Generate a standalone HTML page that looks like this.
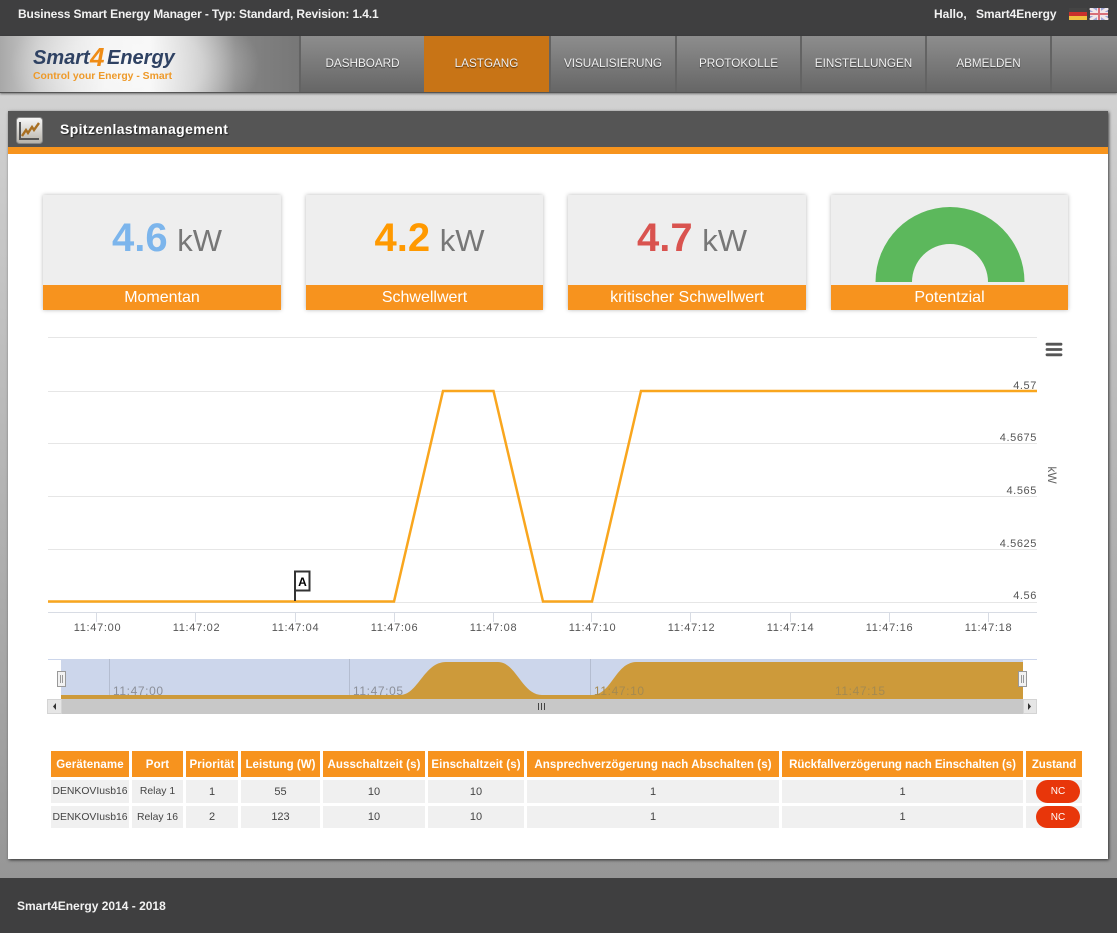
<!DOCTYPE html>
<html lang="de"><head><meta charset="utf-8"><title>Spitzenlastmanagement</title>
<style>
*{box-sizing:border-box}
html,body{margin:0;padding:0}
body{width:1117px;height:933px;position:relative;overflow:hidden;font-family:"Liberation Sans",Arial,sans-serif;background:linear-gradient(#d2d2d2 90px,#969696 880px)}
.a{position:absolute;white-space:nowrap}
#top{left:0;top:0;width:1117px;height:36px;background:#3f3f40;color:#f2f2f2;font-weight:bold;font-size:12px}
#nav{left:0;top:36px;width:1117px;height:57px;background:linear-gradient(#8d8d8d,#666);border-bottom:1px solid #555;box-shadow:0 1px 2px rgba(0,0,0,.45)}
#logo{left:0;top:0;width:299px;height:56px;background:radial-gradient(ellipse 125px 70px at 135px 30px,rgba(255,255,255,.55) 0,rgba(255,255,255,.4) 55%,rgba(255,255,255,0) 100%),linear-gradient(90deg,#a8a8a8 0,#cccccc 40px,#eeeeee 105px,#f2f2f2 150px,#bcbcbc 195px,#858585 235px,#777 299px)}
.btn{top:0;height:56px;width:125px;border-left:2px solid #636363;color:#f0f0f0;font-size:11.7px;line-height:55px;text-align:center;text-shadow:0 1px 1px rgba(0,0,0,.6)}
#panel{left:8px;top:111px;width:1100px;height:748px;background:#fff;box-shadow:1px 1px 3px rgba(0,0,0,.7)}
#ph{left:0;top:0;width:1100px;height:36px;background:#555;color:#fff;font-weight:bold;font-size:14px;letter-spacing:.38px;line-height:36px;text-shadow:1px 1px 1px #222}
#po{left:0;top:36px;width:1100px;height:7px;background:#f7941d}
.card{top:195px;height:115px;background:#eee;box-shadow:0 0 4px rgba(0,0,0,.28)}
.lab{left:0;bottom:0;width:100%;height:25px;background:#f7931e;color:#fff;font-size:16px;line-height:25px;text-align:center}
.val{left:0;top:19px;width:100%;padding-left:10px;text-align:center;font-size:31px;line-height:48px;color:#777}
.val b{font-size:40px;margin-right:1px}
.th,.td{text-align:center;font-size:11px}
.th{top:751px;height:26px;line-height:28px;background:#f7931e;color:#fff;font-weight:bold;font-size:11.5px;letter-spacing:.1px}
.td{height:23px;line-height:24px;background:#f0f0f0;color:#444}
.r1{top:780px}.r2{top:806px;height:22px;line-height:23px}
.s{font-size:10.4px}
.nc{left:1036px;width:44px;height:23px;border-radius:12px;background:#e8360a;color:#fff;font-size:10px;line-height:24px;text-align:center}
.nc.r2{height:22px;line-height:23px}
#foot{left:0;top:878px;width:1117px;height:55px;background:#3f3f40;color:#f2f2f2;font-weight:bold;font-size:12px}
svg text{font-family:"Liberation Sans",Arial,sans-serif}
</style></head><body>
<div class="a" id="top">
<span class="a" style="left:18px;top:7px;letter-spacing:-.13px">Business Smart Energy Manager - Typ: Standard, Revision: 1.4.1</span>
<span class="a" style="left:934px;top:7px">Hallo,</span>
<span class="a" style="left:976px;top:7px;letter-spacing:-.08px">Smart4Energy</span>
<svg class="a" style="left:1069px;top:8px" width="40" height="12" viewBox="0 0 40 12"><rect width="18" height="4" fill="#444"/><rect y="4" width="18" height="4" fill="#c9302c"/><rect y="8" width="18" height="4" fill="#f0c040"/><rect x="21" width="18" height="12" fill="#a0a6d8"/><path d="M21 0L39 12M39 0L21 12" stroke="#f2e8ea" stroke-width="3"/><path d="M30 0V12M21 6H39" stroke="#f2e8ea" stroke-width="4"/><path d="M30 0V12M21 6H39" stroke="#d8707a" stroke-width="2"/></svg>
</div>
<div class="a" id="nav">
<div class="a" id="logo">
<span class="a" style="left:33px;top:10px;font-size:20px;line-height:24px;font-weight:bold;font-style:italic;color:#2f4263">Smart</span>
<span class="a" style="left:90px;top:6px;font-size:26px;line-height:30px;font-weight:bold;font-style:italic;color:#ef8c16">4</span>
<span class="a" style="left:107px;top:10px;font-size:20px;line-height:24px;font-weight:bold;font-style:italic;color:#2f4263">Energy</span>
<span class="a" style="left:33px;top:34px;font-size:10.4px;line-height:13px;font-weight:bold;color:#ee9a2a">Control your Energy - Smart</span>
</div>
<div class="a btn" style="left:299px">DASHBOARD</div>
<div class="a btn" style="left:424px;background:#c87416;border-left:0">LASTGANG</div>
<div class="a btn" style="left:549px;width:126px">VISUALISIERUNG</div>
<div class="a btn" style="left:675px">PROTOKOLLE</div>
<div class="a btn" style="left:800px">EINSTELLUNGEN</div>
<div class="a btn" style="left:925px">ABMELDEN</div>
<div class="a btn" style="left:1050px;width:67px"></div>
</div>
<div class="a" id="panel">
<div class="a" id="ph"><span class="a" style="left:52px;top:0">Spitzenlastmanagement</span>
<svg class="a" style="left:8px;top:6px" width="27" height="27" viewBox="0 0 27 27"><defs><linearGradient id="ig" x1="0" y1="0" x2="0" y2="1"><stop offset="0" stop-color="#f8f8f8"/><stop offset="1" stop-color="#b5b1a8"/></linearGradient></defs><rect x=".5" y=".5" width="26" height="26" rx="3" fill="url(#ig)" stroke="#888"/><path d="M4 5V22H23" fill="none" stroke="#555" stroke-width="2"/><path d="M6 19L10 13L12 16L16 10L18 13L23 6" fill="none" stroke="#a86f22" stroke-width="2.4"/></svg>
</div>
<div class="a" id="po"></div>
</div>
<div class="a card" style="left:43px;width:238px"><div class="a val"><b style="color:#7cb5ec">4.6</b> kW</div><div class="a lab">Momentan</div></div>
<div class="a card" style="left:306px;width:237px"><div class="a val"><b style="color:#f90">4.2</b> kW</div><div class="a lab">Schwellwert</div></div>
<div class="a card" style="left:568px;width:238px"><div class="a val"><b style="color:#d9534f">4.7</b> kW</div><div class="a lab">kritischer Schwellwert</div></div>
<div class="a card" style="left:831px;width:237px"><svg class="a" style="left:0;top:0" width="237" height="90"><path d="M44.5 87A74.5 75 0 0 1 193.5 87H157A38 38 0 0 0 81 87Z" fill="#5cb85c"/></svg><div class="a lab">Potentzial</div></div>
<svg class="a" style="left:0;top:330px" width="1117" height="395" viewBox="0 330 1117 395">
<g stroke="#e6e6e6" fill="none"><path d="M48 337.5H1037M48 391.5H1037M48 443.5H1037M48 496.5H1037M48 549.5H1037M48 602.5H1037"/></g>
<path d="M48 612.5H1037" stroke="#d8dce4"/>
<path d="M96.5 612V622M195.5 612V622M295.5 612V622M394.5 612V622M493.5 612V622M591.5 612V622M690.5 612V622M790.5 612V622M889.5 612V622M988.5 612V622" stroke="#d8dce4"/>
<path d="M48 601.5H394L443 391H493.5L543 601.5H592L641 391H1037" fill="none" stroke="#f9a61e" stroke-width="2.5"/>
<path d="M295 601V571.5H309.5V590.5H295" fill="#fff" stroke="#333" stroke-width="2"/>
<text x="302.5" y="586" font-size="12" font-weight="bold" text-anchor="middle" fill="#000">A</text>
<g font-size="11" fill="#555" letter-spacing=".7" text-anchor="middle">
<text x="97.5" y="631">11:47:00</text><text x="196.5" y="631">11:47:02</text><text x="295.5" y="631">11:47:04</text><text x="394.5" y="631">11:47:06</text><text x="493.5" y="631">11:47:08</text><text x="592.5" y="631">11:47:10</text><text x="691.5" y="631">11:47:12</text><text x="790.5" y="631">11:47:14</text><text x="889.5" y="631">11:47:16</text><text x="988.5" y="631">11:47:18</text>
</g>
<g font-size="11" fill="#555" letter-spacing=".6" text-anchor="end">
<text x="1037" y="389">4.57</text><text x="1037" y="441">4.5675</text><text x="1037" y="494">4.565</text><text x="1037" y="547">4.5625</text><text x="1037" y="599">4.56</text>
</g>
<text transform="translate(1048 475) rotate(90)" font-size="12" fill="#666" text-anchor="middle">kW</text>
<path d="M1047 344.2H1061M1047 349.5H1061M1047 354.8H1061" stroke="#555" stroke-width="2.8" stroke-linecap="round"/>
<rect x="61" y="659" width="962" height="40" fill="#ccd6eb"/>
<path d="M48 659.5H1037" stroke="#ccd6eb"/>
<path d="M109.5 659V699M349.5 659V699M590.5 659V699" stroke="#b4bdd0"/>
<g font-size="12" fill="#8b8f98" letter-spacing=".6"><text x="113" y="695">11:47:00</text><text x="353" y="695">11:47:05</text></g>
<path d="M61 699V695H400C418 695 424 662 446 662H498C516 662 522 695 542 695H592C612 695 615 662 637 662H1023V699Z" fill="#cd9a3a"/>
<g font-size="12" fill="#a58a50" letter-spacing=".6"><text x="594" y="695">11:47:10</text><text x="835" y="695">11:47:15</text></g>
<rect x="47" y="699" width="990" height="15" fill="#c8c8c8"/>
<rect x="47.5" y="699.5" width="14" height="14" fill="#e6e6e6" stroke="#d4d4d4"/>
<rect x="1023.5" y="699.5" width="13" height="14" fill="#e6e6e6" stroke="#d4d4d4"/>
<path d="M56 703L53 706.5L56 710ZM1028 703L1031 706.5L1028 710Z" fill="#333"/>
<path d="M538.5 703V710M541.5 703V710M544.5 703V710" stroke="#444"/>
<g fill="#f2f2f2" stroke="#999"><rect x="57.5" y="671.5" width="8" height="15"/><rect x="1018.5" y="671.5" width="8" height="15"/></g>
<path d="M60.5 675V683M62.5 675V683M1021.5 675V683M1023.5 675V683" stroke="#999"/>
</svg>
<div class="a th" style="left:51px;width:78px">Gerätename</div>
<div class="a th" style="left:132px;width:51px">Port</div>
<div class="a th" style="left:186px;width:52px">Priorität</div>
<div class="a th" style="left:241px;width:79px;letter-spacing:.03px">Leistung (W)</div>
<div class="a th" style="left:323px;width:102px">Ausschaltzeit (s)</div>
<div class="a th" style="left:428px;width:96px">Einschaltzeit (s)</div>
<div class="a th" style="left:527px;width:252px;letter-spacing:.08px">Ansprechverzögerung nach Abschalten (s)</div>
<div class="a th" style="left:782px;width:241px;letter-spacing:-.05px">Rückfallverzögerung nach Einschalten (s)</div>
<div class="a th" style="left:1026px;width:56px;letter-spacing:-.05px">Zustand</div>
<div class="a td r1 s" style="left:51px;width:78px">DENKOVIusb16</div><div class="a td r1 s" style="left:132px;width:51px">Relay 1</div><div class="a td r1" style="left:186px;width:52px">1</div><div class="a td r1" style="left:241px;width:79px">55</div><div class="a td r1" style="left:323px;width:102px">10</div><div class="a td r1" style="left:428px;width:96px">10</div><div class="a td r1" style="left:527px;width:252px">1</div><div class="a td r1" style="left:782px;width:241px">1</div><div class="a td r1" style="left:1026px;width:56px"></div>
<div class="a td r2 s" style="left:51px;width:78px">DENKOVIusb16</div><div class="a td r2 s" style="left:132px;width:51px">Relay 16</div><div class="a td r2" style="left:186px;width:52px">2</div><div class="a td r2" style="left:241px;width:79px">123</div><div class="a td r2" style="left:323px;width:102px">10</div><div class="a td r2" style="left:428px;width:96px">10</div><div class="a td r2" style="left:527px;width:252px">1</div><div class="a td r2" style="left:782px;width:241px">1</div><div class="a td r2" style="left:1026px;width:56px"></div>
<div class="a nc r1">NC</div><div class="a nc r2">NC</div>
<div class="a" id="foot"><span class="a" style="left:17px;top:21px">Smart4Energy 2014 - 2018</span></div>
</body></html>
